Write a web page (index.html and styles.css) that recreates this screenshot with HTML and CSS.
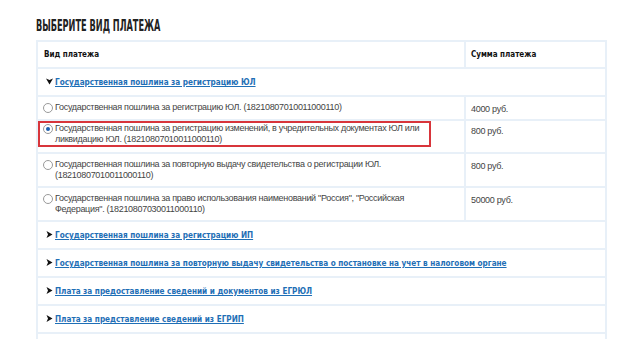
FILE: index.html
```html
<html>
<head>
<meta charset="utf-8">
<link rel="stylesheet" href="styles.css">
</head>
<body>
  <div class="page">
    <h2 class="title"><span>ВЫБЕРИТЕ ВИД ПЛАТЕЖА</span></h2>
    <table class="payments">
      <thead>
        <tr>
          <th class="kind">Вид платежа</th>
          <th class="sum">Сумма платежа</th>
        </tr>
      </thead>
      <tbody>
        <tr class="group">
          <td colspan="2"><span class="arrow">
            <svg width="7" height="7" viewBox="0 0 7 7"><path d="M0 0.5 L3.5 2 L7 0.5 L3.5 6.5 Z" fill="#111"/></svg>
          </span><a href="#">Государственная пошлина за регистрацию ЮЛ</a></td>
        </tr>
        <tr class="option">
          <td><label class="choice"><span class="radio"></span><span class="desc">Государственная пошлина за регистрацию ЮЛ. (18210807010011000110)</span></label></td>
          <td class="amount">4000 руб.</td>
        </tr>
        <tr class="option picked">
          <td><label class="choice"><span class="radio on"></span><span class="desc">Государственная пошлина за регистрацию изменений, в учредительных документах ЮЛ или ликвидацию ЮЛ. (18210807010011000110)</span></label></td>
          <td class="amount">800 руб.</td>
        </tr>
        <tr class="option">
          <td><label class="choice"><span class="radio"></span><span class="desc">Государственная пошлина за повторную выдачу свидетельства о регистрации ЮЛ. (18210807010011000110)</span></label></td>
          <td class="amount">800 руб.</td>
        </tr>
        <tr class="option">
          <td><label class="choice"><span class="radio"></span><span class="desc">Государственная пошлина за право использования наименований "Россия", "Российская Федерация". (18210807030011000110)</span></label></td>
          <td class="amount">50000 руб.</td>
        </tr>
        <tr class="group">
          <td colspan="2"><span class="arrow">
            <svg width="7" height="7" viewBox="0 0 7 7"><path d="M0.5 0 L6.5 3.5 L0.5 7 L2 3.5 Z" fill="#111"/></svg>
          </span><a href="#">Государственная пошлина за регистрацию ИП</a></td>
        </tr>
        <tr class="group">
          <td colspan="2"><span class="arrow">
            <svg width="7" height="7" viewBox="0 0 7 7"><path d="M0.5 0 L6.5 3.5 L0.5 7 L2 3.5 Z" fill="#111"/></svg>
          </span><a href="#">Государственная пошлина за повторную выдачу свидетельства о постановке на учет в налоговом органе</a></td>
        </tr>
        <tr class="group">
          <td colspan="2"><span class="arrow">
            <svg width="7" height="7" viewBox="0 0 7 7"><path d="M0.5 0 L6.5 3.5 L0.5 7 L2 3.5 Z" fill="#111"/></svg>
          </span><a href="#">Плата за предоставление сведений и документов из ЕГРЮЛ</a></td>
        </tr>
        <tr class="group">
          <td colspan="2"><span class="arrow">
            <svg width="7" height="7" viewBox="0 0 7 7"><path d="M0.5 0 L6.5 3.5 L0.5 7 L2 3.5 Z" fill="#111"/></svg>
          </span><a href="#">Плата за представление сведений из ЕГРИП</a></td>
        </tr>
        <tr class="group">
          <td colspan="2"></td>
        </tr>
      </tbody>
    </table>
  </div>
</body>
</html>
```
FILE: styles.css
```css
body{
  margin: 0;
  background: #fff;
  font-family: "Liberation Sans", Arial, sans-serif;
  color: #444;
}
.page{
  padding: 17px 0 0 36px;
}
.title{
  margin: 0 0 6px 0;
  font-family: "DejaVu Sans Condensed", sans-serif;
  font-weight: bold;
  font-size: 16px;
  line-height: 17px;
  color: #222;
  white-space: nowrap;
}
.title span{
  display: inline-block;
  transform: scaleX(0.57);
  transform-origin: left center;
}
.payments{
  width: 571px;
  border: 2px solid #e8f0f8;
  border-spacing: 0;
  font-size: 9px;
}
.payments th{
  text-align: left;
  font-family: "DejaVu Sans Condensed", Verdana, sans-serif;
  font-size: 8px;
  font-weight: bold;
  color: #111;
  height: 27px;
  padding: 0 6px;
  border-bottom: 2px solid #e8f0f8;
}
.payments th.sum{
  width: 129px;
  padding: 0 5px;
  border-left: 2px solid #e8f0f8;
}
.payments td.amount{
  border-left: 2px solid #e8f0f8;
}
.payments td{
  border-bottom: 2px solid #e8f0f8;
  vertical-align: top;
}
.group td{
  height: 28px;
  padding: 0 8px;
  vertical-align: middle;
}
.group a{
  font-family: "DejaVu Sans Condensed", Verdana, sans-serif;
  font-size: 8.15px;
  font-weight: bold;
  color: #1f6fb6;
}
.arrow{
  display: inline-block;
  width: 9px;
}
.option td{
  padding: 0;
  line-height: 11px;
}
.option td.amount{
  padding: 7px 5px 4px 5px;
  letter-spacing: -0.3px;
}
.desc{
  letter-spacing: -0.3px;
}
.choice{
  display: flex;
  margin: 3px 33px 3px 0;
  padding: 0 4px 0 3px;
  border: 2px solid transparent;
}
.picked .choice{
  margin-top: 0;
  margin-bottom: 5px;
  border-color: #d8353b;
}
.picked td.amount{
  padding-top: 5px;
}
.radio{
  flex: none;
  width: 8px;
  height: 8px;
  margin: 1px 2px 0 0;
  border: 1px solid #9a9a9a;
  border-radius: 50%;
  background: #fff;
  position: relative;
}
.radio.on::after{
  content: "";
  position: absolute;
  left: 2px;
  top: 2px;
  width: 4px;
  height: 4px;
  border-radius: 50%;
  background: #1b5fb0;
}
```
